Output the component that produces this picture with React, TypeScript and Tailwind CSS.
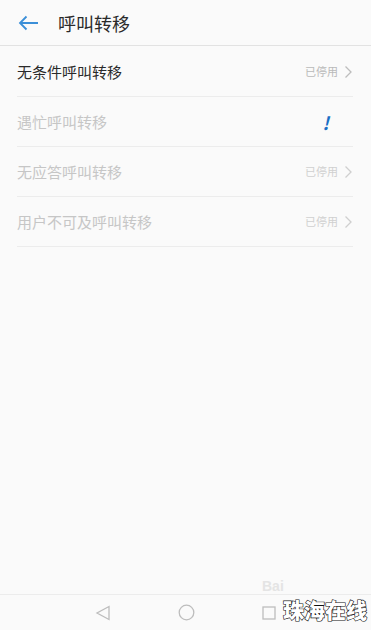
import React from "react";

const rows = [
  { title: "无条件呼叫转移", status: "已停用", enabled: true },
  { title: "遇忙呼叫转移", status: "", enabled: false, alert: true },
  { title: "无应答呼叫转移", status: "已停用", enabled: false },
  { title: "用户不可及呼叫转移", status: "已停用", enabled: false },
];

function Chevron({ color }: { color: string }) {
  return (
    <svg width="9" height="14" viewBox="0 0 9 14" fill="none">
      <path d="M1.5 1.5 L7 7 L1.5 12.5" stroke={color} strokeWidth="1.3" />
    </svg>
  );
}

export default function App() {
  return (
    <div
      className="w-[371px] h-[630px] bg-[#fafafa] flex flex-col overflow-hidden"
      style={{ fontFamily: '"Noto Sans CJK SC", "Noto Sans", sans-serif' }}
    >
      {/* Header */}
      <div className="h-[46px] flex items-center border-b border-[#e2e2e2] shrink-0">
        <div className="w-[58px] pl-[18px]">
          <svg width="21" height="16" viewBox="0 0 21 16" fill="none">
            <path d="M20 8 H2 M8.5 1.5 L2 8 L8.5 14.5" stroke="#3b8fd8" strokeWidth="1.8" />
          </svg>
        </div>
        <span className="text-[18px] text-[#2a2a2a] leading-none">呼叫转移</span>
      </div>

      {/* List */}
      <div className="pl-[17px] pr-[18px] pt-[1px] shrink-0">
        {rows.map((r) => (
          <div key={r.title} className="h-[50px] flex items-center justify-between border-b border-[#ececec]">
            <span className={`text-[15px] leading-none ${r.enabled ? "text-[#2a2a2a]" : "text-[#c6c6c6]"}`}>
              {r.title}
            </span>
            {r.alert ? (
              <span className="mr-[24px] text-[18px] font-bold italic text-[#1a6fc4] leading-none">!</span>
            ) : (
              <div className="flex items-center gap-[6px]">
                <span className={`text-[11px] leading-none ${r.enabled ? "text-[#b9b9b9]" : "text-[#d0d0d0]"}`}>
                  {r.status}
                </span>
                <Chevron color={r.enabled ? "#bdbdbd" : "#cfcfcf"} />
              </div>
            )}
          </div>
        ))}
      </div>

      <div className="flex-1" />

      {/* Bottom nav */}
      <div className="h-[36px] border-t border-[#ececec] flex items-center relative shrink-0">
        <div className="flex items-center w-full pl-[95px] gap-[67px]">
          <svg width="16" height="16" viewBox="0 0 16 16" fill="none">
            <path d="M14 1.5 L2 8 L14 14.5 Z" stroke="#bdbdbd" strokeWidth="1.3" />
          </svg>
          <svg width="17" height="17" viewBox="0 0 17 17" fill="none">
            <circle cx="8.5" cy="8.5" r="7.3" stroke="#bdbdbd" strokeWidth="1.3" />
          </svg>
          <svg width="14" height="14" viewBox="0 0 14 14" fill="none">
            <rect x="1" y="1" width="12" height="12" stroke="#bdbdbd" strokeWidth="1.3" />
          </svg>
        </div>
        <span className="absolute left-[262px] top-[-16px] text-[14px] font-bold text-[#e4e4e4] leading-none [font-family:'Liberation_Sans',sans-serif]">
          Bai
        </span>
        <span className="absolute right-[4px] top-[4px] text-[21px] font-black text-white leading-none [-webkit-text-stroke:1.2px_#111] [paint-order:stroke_fill]">
          珠海在线
        </span>
      </div>
    </div>
  );
}
